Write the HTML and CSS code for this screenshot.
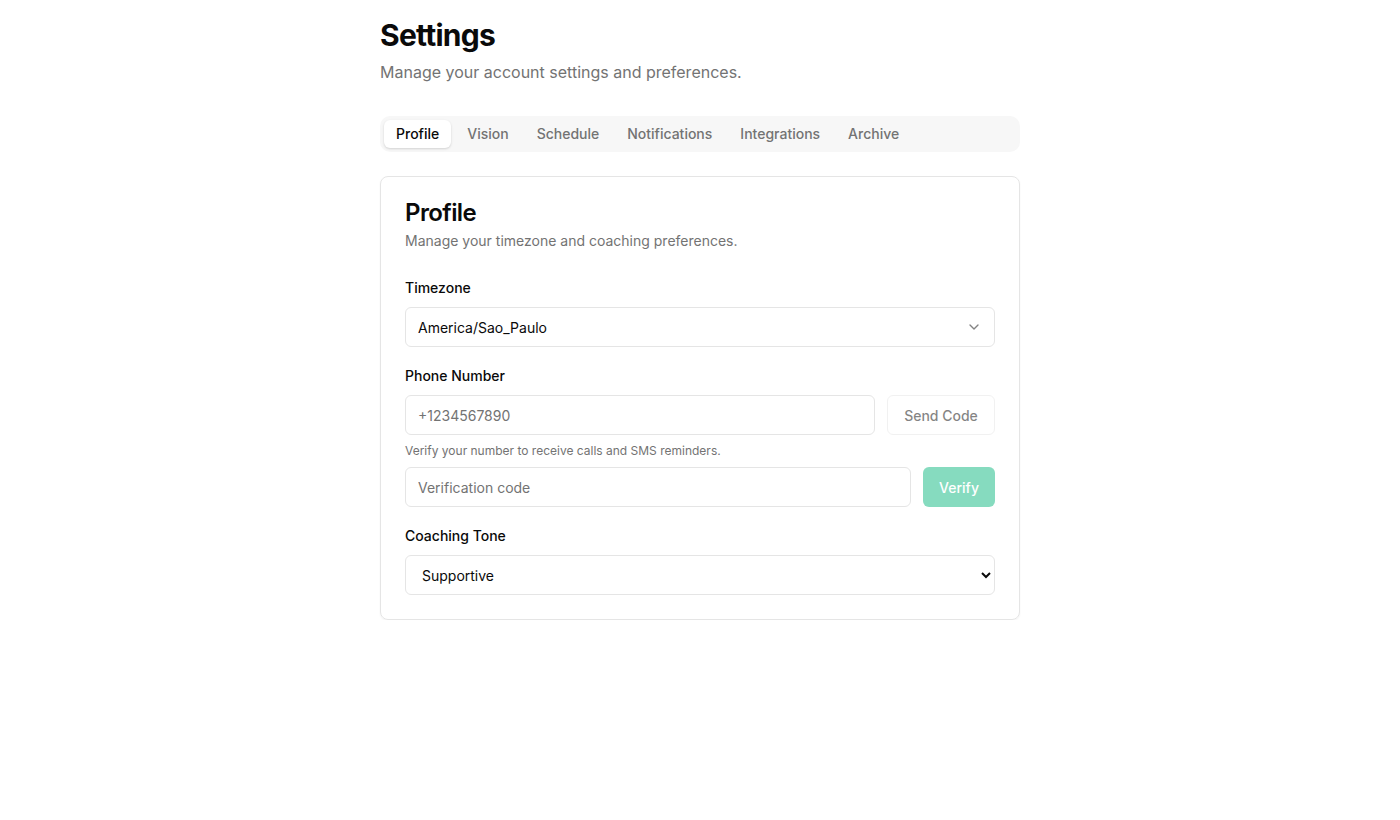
FILE: index.html
```html
<!DOCTYPE html>
<html lang="en">
<head>
<meta charset="utf-8">
<title>Settings</title>
<link rel="stylesheet" href="styles.css">
</head>
<body>
<main class="page">
  <header class="page-head">
    <h1 class="page-title">Settings</h1>
    <p class="page-sub">Manage your account settings and preferences.</p>
  </header>

  <nav class="tabs">
    <button class="tab active">Profile</button>
    <button class="tab">Vision</button>
    <button class="tab">Schedule</button>
    <button class="tab">Notifications</button>
    <button class="tab">Integrations</button>
    <button class="tab">Archive</button>
  </nav>

  <section class="card">
    <div class="card-head">
      <h2 class="card-title">Profile</h2>
      <p class="card-desc">Manage your timezone and coaching preferences.</p>
    </div>

    <div class="field">
      <label class="label">Timezone</label>
      <button class="select-trigger">
        <span>America/Sao_Paulo</span>
        <svg class="chev" width="16" height="16" viewBox="0 0 24 24" fill="none" stroke="currentColor" stroke-width="2" stroke-linecap="round" stroke-linejoin="round"><path d="m6 9 6 6 6-6"/></svg>
      </button>
    </div>

    <div class="field">
      <label class="label">Phone Number</label>
      <div class="row">
        <input class="input" type="text" placeholder="+1234567890">
        <button class="btn-outline">Send Code</button>
      </div>
      <p class="help">Verify your number to receive calls and SMS reminders.</p>
      <div class="row">
        <input class="input" type="text" placeholder="Verification code">
        <button class="btn-primary">Verify</button>
      </div>
    </div>

    <div class="field">
      <label class="label">Coaching Tone</label>
      <select class="native-select">
        <option>Supportive</option>
        <option>Direct</option>
        <option>Motivational</option>
      </select>
    </div>
  </section>
</main>
</body>
</html>
```

FILE: styles.css
```css
* { box-sizing: border-box; }
html, body { margin: 0; padding: 0; background: #ffffff; }
body {
  font-family: Inter, "Noto Sans", "Liberation Sans", sans-serif;
  color: #0a0a0a;
}
.page {
  width: 640px;
  margin: 0 auto;
  padding-top: 17px;
}
.page-title {
  margin: 0;
  font-size: 30px;
  line-height: 36px;
  font-weight: 700;
  letter-spacing: -0.75px;
}
.page-sub {
  margin: 7px 0 0;
  font-size: 16px;
  line-height: 24px;
  color: #737373;
}
.tabs {
  margin-top: 32px;
  height: 36px;
  padding: 4px;
  display: flex;
  gap: 4px;
  background: #f7f7f7;
  border-radius: 10px;
}
.tab {
  font-family: inherit;
  font-size: 14px;
  font-weight: 500;
  line-height: 20px;
  height: 28px;
  padding: 0 12px;
  border: none;
  border-radius: 6px;
  background: transparent;
  color: #737373;
  cursor: pointer;
}
.tab.active {
  background: #ffffff;
  color: #0a0a0a;
  box-shadow: 0 1px 3px rgba(0,0,0,0.1), 0 1px 2px rgba(0,0,0,0.06);
}
.card {
  margin-top: 24px;
  border: 1px solid #e5e5e5;
  border-radius: 8px;
  padding: 24px;
  box-shadow: 0 1px 2px rgba(0,0,0,0.05);
}
.card-head { margin-bottom: 30px; }
.card-title {
  margin: 0;
  font-size: 24px;
  line-height: 24px;
  font-weight: 600;
  letter-spacing: -0.6px;
}
.card-desc {
  margin: 6px 0 0;
  font-size: 14px;
  line-height: 20px;
  color: #737373;
}
.field + .field { margin-top: 22px; }
.label {
  display: block;
  font-size: 14px;
  line-height: 14px;
  font-weight: 500;
  margin-bottom: 12px;
}
.select-trigger {
  width: 100%;
  height: 40px;
  display: flex;
  align-items: center;
  justify-content: space-between;
  padding: 0 12px;
  border: 1px solid #e5e5e5;
  border-radius: 6px;
  background: #fff;
  font-family: inherit;
  font-size: 14px;
  color: #0a0a0a;
  text-align: left;
}
.chev { color: #0a0a0a; opacity: 0.5; }
.row { display: flex; gap: 12px; }
.input {
  flex: 1;
  min-width: 0;
  height: 40px;
  padding: 0 12px;
  border: 1px solid #e5e5e5;
  border-radius: 6px;
  font-family: inherit;
  font-size: 14px;
  color: #0a0a0a;
  background: #fff;
  outline: none;
}
.input::placeholder { color: #737373; }
.btn-outline, .btn-primary {
  height: 40px;
  padding: 0 16px;
  border-radius: 6px;
  font-family: inherit;
  font-size: 14px;
  font-weight: 500;
  opacity: 0.5;
}
.btn-outline {
  width: 108px;
  border: 1px solid #e5e5e5;
  background: #fff;
  color: #0a0a0a;
}
.btn-primary {
  width: 72px;
  border: none;
  background: #10b981;
  color: #fff;
}
.help {
  margin: 8px 0;
  font-size: 12px;
  line-height: 16px;
  color: #737373;
}
.native-select {
  width: 100%;
  height: 40px;
  padding: 0 8px 0 12px;
  border: 1px solid #e5e5e5;
  border-radius: 6px;
  background: #fff;
  font-family: inherit;
  font-size: 14px;
  color: #0a0a0a;
}
```
